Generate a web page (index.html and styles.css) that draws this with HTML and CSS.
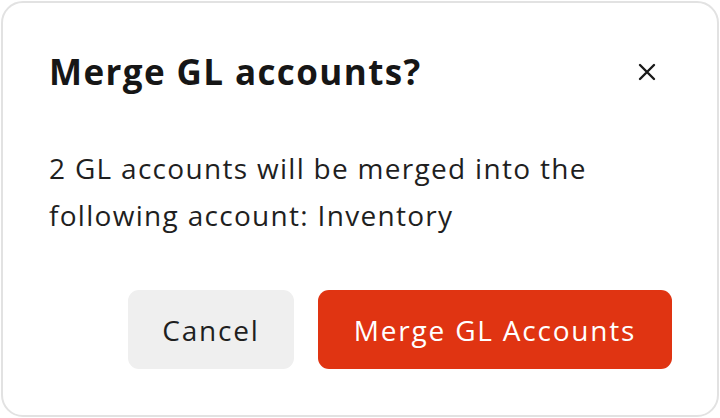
FILE: index.html
```html
<!DOCTYPE html>
<html>
<head>
  <title>Merge GL accounts</title>
  <link rel="stylesheet" href="styles.css">
</head>
<body>
  <div class="dialog">
    <div class="dialog-header">
      <h2>Merge GL accounts?</h2>
      <button class="close-btn" aria-label="Close">
        <svg width="18" height="18" viewBox="0 0 18 18">
          <path d="M2 2 L16 16 M16 2 L2 16" stroke="#1a1a1a" stroke-width="2.4" stroke-linecap="round" fill="none"/>
        </svg>
      </button>
    </div>

    <p class="dialog-text">2 GL accounts will be merged into the following account: Inventory</p>

    <div class="dialog-actions">
      <button class="btn btn-cancel">Cancel</button>
      <button class="btn btn-merge">Merge GL Accounts</button>
    </div>
  </div>
</body>
</html>
```

FILE: styles.css
```css
body {
  margin: 0;
  padding: 1px;
  background-color: #fff;
  font-family: 'Open Sans', 'Noto Sans', sans-serif;
}

.dialog {
  box-sizing: border-box;
  height: 416px;
  border: 2px solid #e2e2e2;
  border-radius: 22px;
  background-color: #fff;
  padding: 45px 45px 0 46px;
}

.dialog-header {
  display: flex;
  align-items: center;
  justify-content: space-between;
}

.dialog-header h2 {
  margin: 0;
  font-size: 35px;
  font-weight: 700;
  letter-spacing: 1.4px;
  color: #161616;
  line-height: 48px;
}

.close-btn {
  background: none;
  border: none;
  padding: 0;
  margin-right: 16px;
  width: 18px;
  height: 18px;
  cursor: pointer;
}

.dialog-text {
  margin: 49px 0 0 0;
  font-size: 28px;
  letter-spacing: 1.3px;
  line-height: 47px;
  color: #1f1f1f;
}

.dialog-actions {
  display: flex;
  justify-content: flex-end;
  gap: 24px;
  margin-top: 51px;
}

.btn {
  height: 79px;
  border: none;
  border-radius: 11px;
  font-family: inherit;
  font-size: 28px;
  letter-spacing: 1.8px;
  cursor: pointer;
}

.btn-cancel {
  width: 166px;
  background-color: #efefef;
  color: #1f1f1f;
}

.btn-merge {
  width: 354px;
  background-color: #e03412;
  color: #fff;
}
```
